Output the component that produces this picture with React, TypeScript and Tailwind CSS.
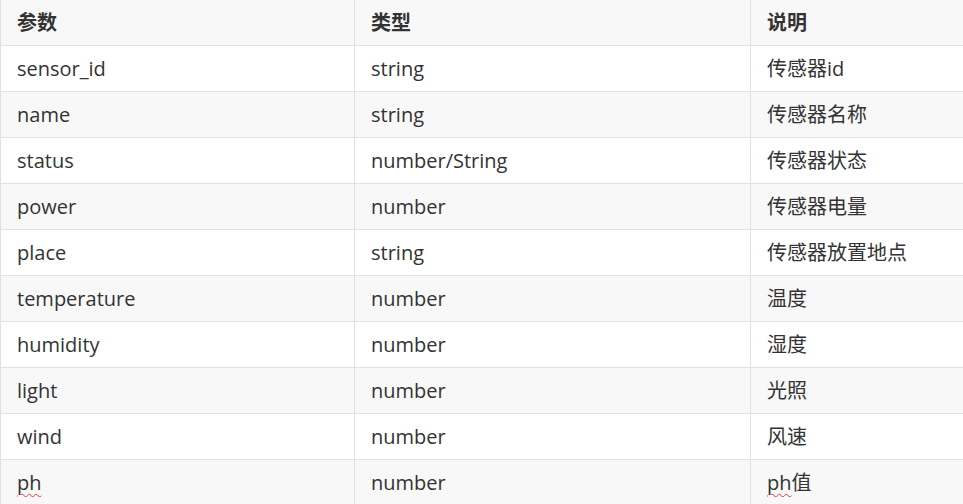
import React from 'react';

const rows: [string, string, string][] = [
  ['sensor_id', 'string', '传感器id'],
  ['name', 'string', '传感器名称'],
  ['status', 'number/String', '传感器状态'],
  ['power', 'number', '传感器电量'],
  ['place', 'string', '传感器放置地点'],
  ['temperature', 'number', '温度'],
  ['humidity', 'number', '湿度'],
  ['light', 'number', '光照'],
  ['wind', 'number', '风速'],
  ['ph', 'number', 'ph值'],
];

const Squiggle = ({ children }: { children: React.ReactNode }) => (
  <span className="underline decoration-wavy decoration-[#e53935] decoration-1 underline-offset-[3px]">{children}</span>
);

const App = () => {
  return (
    <div
      className="h-[504px] w-[963px] overflow-hidden bg-white text-[#333333]"
      style={{ fontFamily: '"Open Sans", "Noto Sans CJK SC", sans-serif' }}
    >
      <table className="-mt-px w-[1146px] border-collapse text-[20px] leading-[26px]">
        <thead>
          <tr className="bg-[#f8f8f8]">
            <th className="h-[46px] w-[354px] border border-[#dfe2e5] px-4 text-left font-bold">参数</th>
            <th className="h-[46px] w-[396px] border border-[#dfe2e5] px-4 text-left font-bold">类型</th>
            <th className="h-[46px] border border-[#dfe2e5] px-4 text-left font-bold">说明</th>
          </tr>
        </thead>
        <tbody>
          {rows.map(([param, type, desc], i) => (
            <tr key={param} className={i % 2 === 1 ? 'bg-[#f8f8f8]' : 'bg-white'}>
              <td className="h-[46px] border border-[#dfe2e5] px-4">
                {param === 'ph' ? <Squiggle>ph</Squiggle> : param}
              </td>
              <td className="h-[46px] border border-[#dfe2e5] px-4">{type}</td>
              <td className="h-[46px] border border-[#dfe2e5] px-4">
                {desc === 'ph值' ? (
                  <>
                    <Squiggle>ph</Squiggle>值
                  </>
                ) : (
                  desc
                )}
              </td>
            </tr>
          ))}
        </tbody>
      </table>
    </div>
  );
};

export default App;
